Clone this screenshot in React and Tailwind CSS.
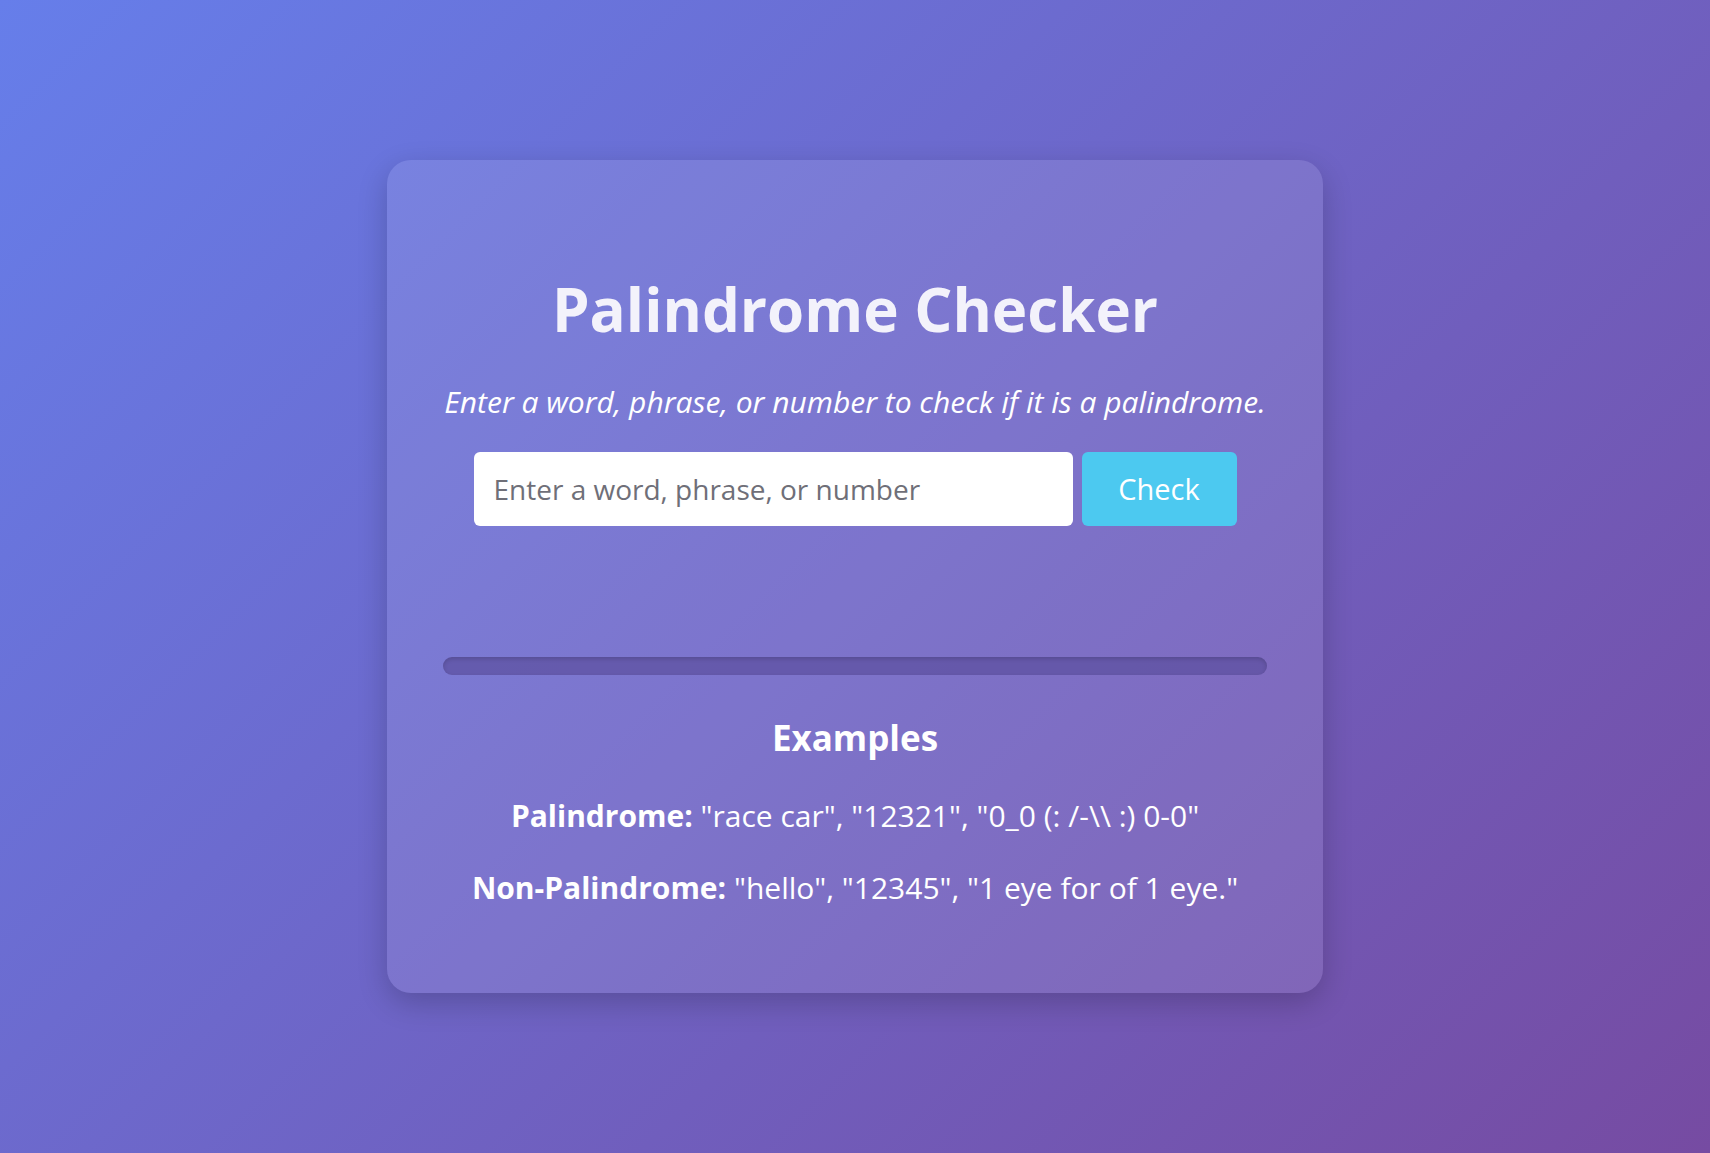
import React, { useState } from 'react';

const App = () => {
  const [text, setText] = useState('');

  return (
    <div
      className="min-h-screen w-full flex items-center justify-center bg-[linear-gradient(135deg,#667eea_0%,#764ba2_100%)]"
      style={{ fontFamily: '"Open Sans", "Noto Sans", sans-serif' }}
    >
      <div className="w-[936px] rounded-3xl bg-white/10 shadow-[0_10px_30px_rgba(0,0,0,0.2)] px-14 pt-[113px] pb-[84px] flex flex-col items-center text-white">
        <h1 className="text-[60px] leading-[1.2] font-bold text-[#f3f2fb]">Palindrome Checker</h1>
        <p className="mt-[37px] text-[30px] leading-[1.3] italic text-white">
          Enter a word, phrase, or number to check if it is a palindrome.
        </p>

        {/* input row */}
        <div className="mt-[31px] flex items-center gap-[9px]">
          <input
            value={text}
            onChange={(e) => setText(e.target.value)}
            placeholder="Enter a word, phrase, or number"
            className="w-[599px] h-[74px] rounded-md bg-white px-5 text-[28px] text-gray-800 placeholder:text-[#6f6f78] outline-none"
          />
          <button className="w-[155px] h-[74px] rounded-md bg-[#4cc9f0] text-[29px] text-white">Check</button>
        </div>

        {/* result area */}
        <div className="h-[131px]"></div>

        <div className="w-full h-[18px] rounded-full bg-[#5b4f9e]/70 shadow-[inset_0_2px_4px_rgba(0,0,0,0.15)]"></div>

        <h2 className="mt-[40px] text-[35px] leading-[1.3] font-bold">Examples</h2>
        <p className="mt-[35px] text-[30px] leading-[1.4]">
          <span className="font-bold">Palindrome:</span> "race car", "12321", "0_0 (: /-\\ :) 0-0"
        </p>
        <p className="mt-[30px] text-[30px] leading-[1.4]">
          <span className="font-bold">Non-Palindrome:</span> "hello", "12345", "1 eye for of 1 eye."
        </p>
      </div>
    </div>
  );
};

export default App;
